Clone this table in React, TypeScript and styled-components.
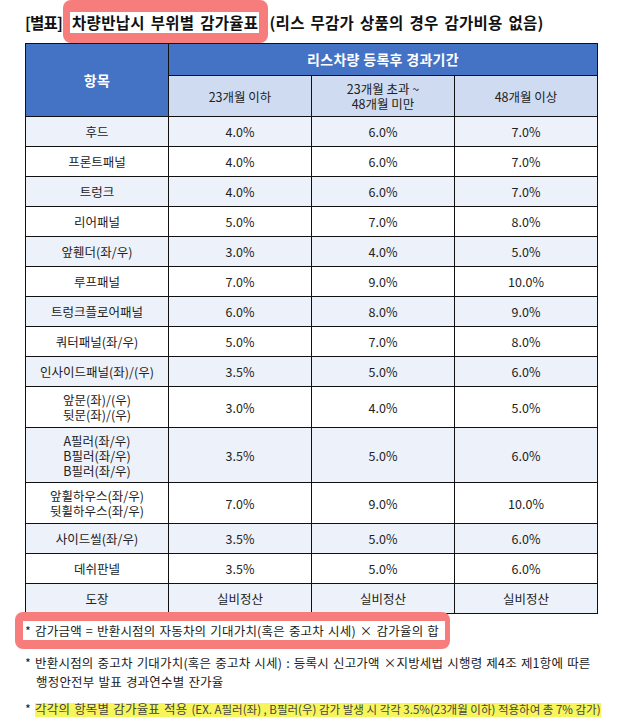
import React from "react";
import styled, { createGlobalStyle } from "styled-components";

const Global = createGlobalStyle`
  html, body { margin: 0; padding: 0; background: #ffffff; }
  body { font-family: "Noto Sans CJK KR", "Noto Sans", sans-serif; color: #1a1a1a; }
`;

const Page = styled.div`
  width: 622px;
  height: 721px;
  box-sizing: border-box;
  padding: 0 25px;
  overflow: hidden;
`;

const TitleRow = styled.div`
  display: flex;
  align-items: center;
  height: 43px;
  font-size: 15.5px;
  font-weight: 700;
  letter-spacing: 0.3px;
  word-spacing: 2px;
  white-space: nowrap;
  color: #111;
`;

const TitleLead = styled.span`
  letter-spacing: -0.8px;
  padding-right: 1px;
`;

const RedMark = styled.span`
  display: inline-flex;
  align-items: center;
  align-self: flex-start;
  height: 43px;
  box-sizing: border-box;
  padding: 12px 9px 10px 7px;
  background: #f77d7d;
  border-radius: 8px;
`;

const WhiteMark = styled.span`
  display: inline-block;
  background: #ffffff;
  line-height: 21px;
  padding: 0 1px 0 2px;
`;

const TitleTail = styled.span`
  margin-left: 1px;
`;

const Table = styled.table`
  width: 572px;
  border-collapse: collapse;
  table-layout: fixed;
  font-size: 12.5px;
  color: #222;
`;

const HeadCell = styled.th<{ $light?: boolean }>`
  border: 1px solid #111;
  background: ${(p) => (p.$light ? "#cfdbf1" : "#4472c4")};
  color: ${(p) => (p.$light ? "#222" : "#ffffff")};
  font-weight: ${(p) => (p.$light ? 400 : 700)};
  font-size: ${(p) => (p.$light ? "12.5px" : "14px")};
  letter-spacing: ${(p) => (p.$light ? "0" : "0.3px")};
  line-height: 15px;
  text-align: center;
  vertical-align: middle;
  padding: 0 4px;
`;

const Row = styled.tr<{ $alt: boolean; $h: number }>`
  background: ${(p) => (p.$alt ? "#edf1f9" : "#ffffff")};
  height: ${(p) => p.$h}px;
`;

const Cell = styled.td`
  border: 1px solid #111;
  text-align: center;
  vertical-align: middle;
  line-height: 15px;
  padding: 0 4px;
  box-sizing: border-box;
`;

const Notes = styled.div`
  font-size: 12.5px;
  letter-spacing: 0.2px;
  word-spacing: 1px;
  color: #1a1a1a;
`;

const RedNote = styled.div`
  display: inline-block;
  margin-left: -10px;
  margin-top: -2px;
  padding: 9px 5px 9px 8px;
  background: #f77d7d;
  border-radius: 8px;
`;

const WhiteNote = styled.div`
  background: #ffffff;
  line-height: 19px;
  padding: 0 6px 0 2px;
  white-space: nowrap;
`;

const Note = styled.div<{ $top: number }>`
  margin-top: ${(p) => p.$top}px;
  padding-left: 11px;
  text-indent: -11px;
  line-height: 19px;
  white-space: nowrap;
`;

const Yellow = styled.span`
  background: linear-gradient(to bottom, transparent 22%, #f6f65c 22%, #f6f65c 94%, transparent 94%);
  color: #444;
`;

const Small = styled.span`
  font-size: 11.5px;
  letter-spacing: 0;
  word-spacing: 0;
`;

type R = { name: string[]; a: string; b: string; c: string; h: number };

const rows: R[] = [
  { name: ["후드"], a: "4.0%", b: "6.0%", c: "7.0%", h: 30 },
  { name: ["프론트패널"], a: "4.0%", b: "6.0%", c: "7.0%", h: 30 },
  { name: ["트렁크"], a: "4.0%", b: "6.0%", c: "7.0%", h: 30 },
  { name: ["리어패널"], a: "5.0%", b: "7.0%", c: "8.0%", h: 30 },
  { name: ["앞휀더(좌/우)"], a: "3.0%", b: "4.0%", c: "5.0%", h: 30 },
  { name: ["루프패널"], a: "7.0%", b: "9.0%", c: "10.0%", h: 30 },
  { name: ["트렁크플로어패널"], a: "6.0%", b: "8.0%", c: "9.0%", h: 30 },
  { name: ["쿼터패널(좌/우)"], a: "5.0%", b: "7.0%", c: "8.0%", h: 30 },
  { name: ["인사이드패널(좌)/(우)"], a: "3.5%", b: "5.0%", c: "6.0%", h: 30 },
  { name: ["앞문(좌)/(우)", "뒷문(좌)/(우)"], a: "3.0%", b: "4.0%", c: "5.0%", h: 41 },
  { name: ["A필러(좌/우)", "B필러(좌/우)", "B필러(좌/우)"], a: "3.5%", b: "5.0%", c: "6.0%", h: 55 },
  { name: ["앞휠하우스(좌/우)", "뒷휠하우스(좌/우)"], a: "7.0%", b: "9.0%", c: "10.0%", h: 41 },
  { name: ["사이드씰(좌/우)"], a: "3.5%", b: "5.0%", c: "6.0%", h: 30 },
  { name: ["데쉬판넬"], a: "3.5%", b: "5.0%", c: "6.0%", h: 30 },
  { name: ["도장"], a: "실비정산", b: "실비정산", c: "실비정산", h: 30 },
];

const Lines = ({ items }: { items: string[] }) => (
  <>
    {items.map((t, i) => (
      <React.Fragment key={i}>
        {i > 0 && <br />}
        {t}
      </React.Fragment>
    ))}
  </>
);

export default function App() {
  return (
    <>
      <Global />
      <Page>
        <TitleRow>
          <TitleLead>[별표]</TitleLead>
          <RedMark>
            <WhiteMark>차량반납시 부위별 감가율표</WhiteMark>
          </RedMark>
          <TitleTail>(리스 무감가 상품의 경우 감가비용 없음)</TitleTail>
        </TitleRow>
        <Table>
          <colgroup>
            <col style={{ width: 143 }} />
            <col style={{ width: 143 }} />
            <col style={{ width: 143 }} />
            <col style={{ width: 143 }} />
          </colgroup>
          <thead>
            <tr style={{ height: 32 }}>
              <HeadCell rowSpan={2}>항목</HeadCell>
              <HeadCell colSpan={3}>리스차량 등록후 경과기간</HeadCell>
            </tr>
            <tr style={{ height: 41 }}>
              <HeadCell $light>23개월 이하</HeadCell>
              <HeadCell $light>
                23개월 초과 ~<br />
                48개월 미만
              </HeadCell>
              <HeadCell $light>48개월 이상</HeadCell>
            </tr>
          </thead>
          <tbody>
            {rows.map((r, i) => (
              <Row key={i} $alt={i % 2 === 0} $h={r.h}>
                <Cell>
                  <Lines items={r.name} />
                </Cell>
                <Cell>{r.a}</Cell>
                <Cell>{r.b}</Cell>
                <Cell>{r.c}</Cell>
              </Row>
            ))}
          </tbody>
        </Table>
        <Notes>
          <RedNote>
            <WhiteNote>* 감가금액 = 반환시점의 자동차의 기대가치(혹은 중고차 시세) × 감가율의 합</WhiteNote>
          </RedNote>
          <Note $top={4}>
            * 반환시점의 중고차 기대가치(혹은 중고차 시세) : 등록시 신고가액 ×지방세법 시행령 제4조 제1항에 따른
            <br />
            행정안전부 발표 경과연수별 잔가율
          </Note>
          <Note $top={8}>
            *{" "}
            <Yellow>
              각각의 항목별 감가율표 적용{" "}
              <Small>(EX. A필러(좌) , B필러(우) 감가 발생 시 각각 3.5%(23개월 이하) 적용하여 총 7% 감가)</Small>
            </Yellow>
          </Note>
        </Notes>
      </Page>
    </>
  );
}
